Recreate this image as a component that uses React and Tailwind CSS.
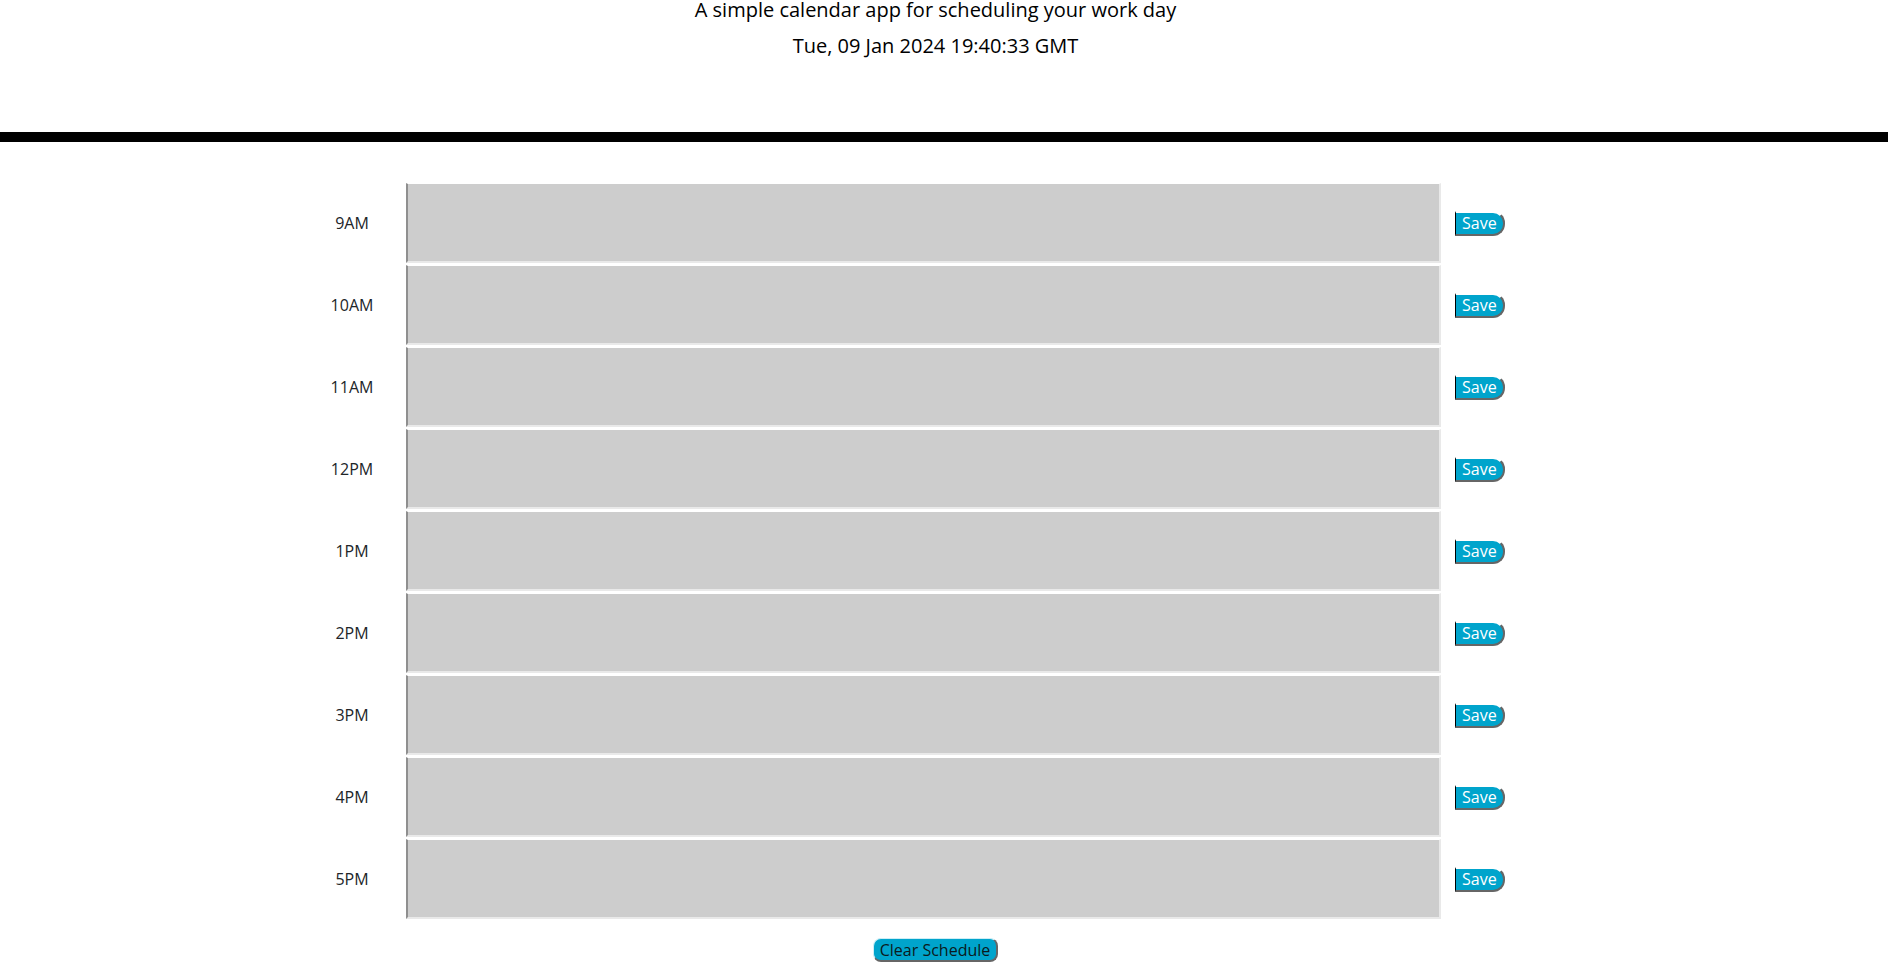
import { useState } from "react";

const HOURS = ["9AM", "10AM", "11AM", "12PM", "1PM", "2PM", "3PM", "4PM", "5PM"];

function TimeBlock({ hour, value, onChange }) {
  const id = `hour-${hour}`;
  return (
    <div className="flex h-20 items-stretch">
      <label htmlFor={id} className="flex w-[110px] shrink-0 items-center justify-center pl-0.5">
        {hour}
      </label>
      <textarea
        id={id}
        value={value}
        onChange={(e) => onChange(hour, e.target.value)}
        className="min-w-0 flex-1 resize-none border-t border-r-2 border-b-2 border-l-2 border-t-white border-r-[#e9e9e9] border-b-[#e9e9e9] border-l-[#8f8f8f] bg-[#cdcdcd] px-3 py-1.5 text-black outline-none"
      />
      <div className="flex w-[134px] shrink-0 items-center pl-3.5">
        <button
          type="button"
          className="h-[25px] rounded-r-xl border-t-2 border-r-2 border-b-2 border-l border-t-white border-r-[#666] border-b-[#666] border-l-black bg-[#00a4cc] px-1.5 leading-5 text-white"
        >
          Save
        </button>
      </div>
    </div>
  );
}

export default function App() {
  const [entries, setEntries] = useState({});
  const update = (hour, text) => setEntries((prev) => ({ ...prev, [hour]: text }));

  return (
    <div className="min-h-screen bg-white font-['Open_Sans',sans-serif] text-base text-[#212529]">
      <header className="border-b-10 border-black pb-[72px] text-center text-xl text-black">
        <div className="pr-[17px]">
          <p className="h-6 leading-5">A simple calendar app for scheduling your work day</p>
          <p className="h-9 leading-[44px]">Tue, 09 Jan 2024 19:40:33 GMT</p>
        </div>
      </header>
      <main className="pt-[41px] pr-[17px]">
        <div className="mx-auto flex max-w-[1279px] flex-col gap-0.5">
          {HOURS.map((hour) => (
            <TimeBlock key={hour} hour={hour} value={entries[hour] ?? ""} onChange={update} />
          ))}
        </div>
        <div className="flex justify-center pt-[19px]">
          <button
            type="button"
            onClick={() => setEntries({})}
            className="h-6 rounded-lg border-t border-r-2 border-b-2 border-l border-t-[#cdeef6] border-r-[#666] border-b-[#666] border-l-[#cdeef6] bg-[#00a4cc] px-1.5 leading-5 text-[#0b1a20]"
          >
            Clear Schedule
          </button>
        </div>
      </main>
    </div>
  );
}
